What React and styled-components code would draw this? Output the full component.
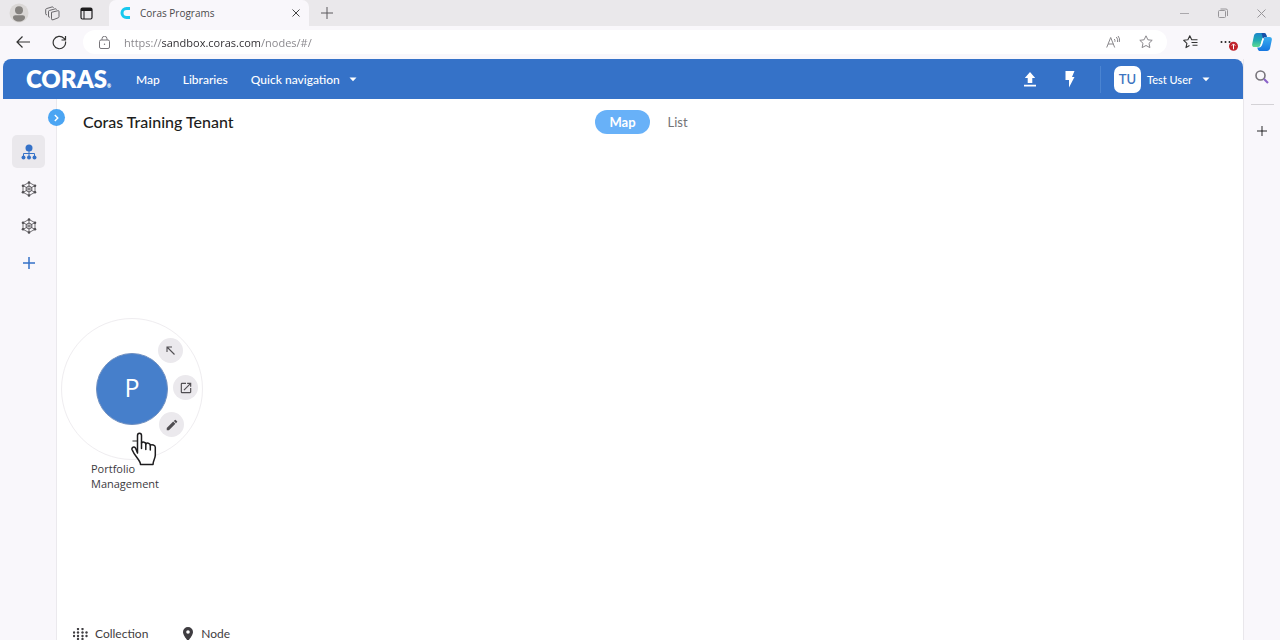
import React, { useState } from 'react';
import styled, { createGlobalStyle } from 'styled-components';

const GlobalStyle = createGlobalStyle`
* {
    box-sizing: border-box;
}
body {
    margin: 0;
    background-color: #f9f7fb;
    font-family: Lato, "Open Sans", sans-serif;
}
button {
    border: 0;
    padding: 0;
    background: none;
    font-family: inherit;
    color: inherit;
    cursor: pointer;
}
svg {
    display: block;
    flex-shrink: 0;
}
`;

const Page = styled.div`
display: flex;
flex-direction: column;
height: 100vh;
overflow: hidden;
`;

const TitleBar = styled.div`
display: flex;
height: 26px;
padding-left: 2px;
background-color: #eae8eb;
`;

const BarButton = styled.button`
display: flex;
align-items: center;
justify-content: center;
flex-shrink: 0;
width: ${props => props.$width || 34}px;
color: ${props => props.$color || '#333'};
`;

const BrowserTab = styled.div`
display: flex;
align-items: center;
width: 200px;
margin-left: 5px;
padding: 0 8px 0 10px;
border-radius: 7px 7px 0 0;
background-color: #f9f7fb;
color: #4a4a4c;
font-family: "Open Sans", sans-serif;
font-size: 10px;
.title {
    flex: 1;
    margin-left: 9px;
}
`;

const WindowControls = styled.div`
display: flex;
margin-left: auto;
`;

const AddressBar = styled.div`
display: flex;
height: 33px;
padding: 0 3px 1px 4px;
`;

const AddressField = styled.label`
display: flex;
align-items: center;
flex: 1;
height: 24px;
margin: 4px 4px 0 5px;
padding: 0 5px 0 15px;
border-radius: 12px;
background-color: white;
color: #77757a;
input {
    flex: 1;
    min-width: 0;
    margin-left: 13px;
    padding: 0;
    border: 0;
    outline: 0;
    font-family: "Open Sans", sans-serif;
    font-size: 11px;
    color: transparent;
    background: linear-gradient(to right, #858388 38px, #2c2a2e 38px, #2c2a2e 136px, #858388 136px);
    background-clip: text;
}
`;

const Body = styled.div`
display: flex;
flex: 1;
min-height: 0;
padding-left: 3px;
`;

const AppFrame = styled.div`
display: flex;
flex-direction: column;
flex: 1;
min-width: 0;
border-radius: 8px 8px 0 0;
overflow: hidden;
background-color: white;
`;

const EdgeSidebar = styled.aside`
display: flex;
flex-direction: column;
align-items: center;
width: 37px;
border-left: 1px solid #e9e7eb;
hr {
    width: 23px;
    margin: 9px 0 8px;
    border: 0;
    border-top: 1px solid #d4d2d6;
}
button {
    display: flex;
    align-items: center;
    justify-content: center;
    width: 36px;
    height: 36px;
}
`;

const AppHeader = styled.header`
display: flex;
align-items: center;
height: 40px;
padding: 0 33px 0 23px;
background-color: #3572c8;
color: white;
font-size: 12px;
font-weight: 500;
`;

const Logo = styled.a`
display: flex;
align-items: flex-end;
width: 84px;
color: white;
font-size: 24px;
font-weight: 800;
line-height: 28px;
text-decoration: none;
small {
    font-size: 5px;
    line-height: 14px;
}
`;

const Nav = styled.nav`
display: flex;
gap: 23px;
margin-left: 26px;
a {
    color: white;
    text-decoration: none;
}
button {
    display: flex;
    align-items: center;
    gap: 9px;
    font-size: 12px;
    font-weight: 500;
}
`;

const HeaderActions = styled.div`
display: flex;
align-items: center;
margin-left: auto;
`;

const HeaderButton = styled.button`
display: flex;
align-items: center;
justify-content: center;
width: 40px;
height: 40px;
`;

const UserMenu = styled.button`
display: flex;
align-items: center;
height: 27px;
margin-left: 10px;
padding-left: 13px;
border-left: 1px solid #4b84d1;
font-size: 11px;
font-weight: 500;
.initials {
    display: flex;
    align-items: center;
    justify-content: center;
    width: 27px;
    height: 27px;
    margin-right: 6px;
    border-radius: 7px;
    background-color: white;
    color: #3d74c0;
    font-size: 13px;
    font-weight: 600;
}
svg {
    margin-left: 10px;
}
`;

const Workspace = styled.div`
display: flex;
flex: 1;
min-height: 0;
`;

const Rail = styled.aside`
position: relative;
display: flex;
flex-direction: column;
gap: 4px;
width: 54px;
padding: 36px 0 0 9px;
border-right: 1px solid #ebe9ed;
background-color: #f9f7fb;
`;

const RailButton = styled.button`
display: flex;
align-items: center;
justify-content: center;
width: 33px;
height: 33px;
border-radius: 5px;
background-color: ${props => (props.$active ? '#eae8ec' : 'transparent')};
color: ${props => props.$color || '#3572c8'};
`;

const RailToggle = styled.button`
position: absolute;
top: 10px;
right: -9px;
z-index: 1;
display: flex;
align-items: center;
justify-content: center;
width: 17px;
height: 17px;
border-radius: 50%;
background-color: #4ba5f3;
color: white;
`;

const Main = styled.main`
display: flex;
flex-direction: column;
flex: 1;
min-width: 0;
`;

const MainHeader = styled.div`
display: grid;
grid-template-columns: 1fr auto 1fr;
align-items: center;
padding: 11px 26px 0;
h1 {
    margin: 0;
    color: #1d1d20;
    font-size: 16px;
    font-weight: 500;
    line-height: 22px;
}
`;

const ViewSwitch = styled.div`
display: flex;
`;

const ViewButton = styled.button`
width: 55px;
height: 24px;
border-radius: 12px;
background-color: ${props => (props.$active ? '#68b1f8' : 'transparent')};
color: ${props => (props.$active ? 'white' : '#737376')};
font-size: 13px;
font-weight: ${props => (props.$active ? 700 : 400)};
`;

const Canvas = styled.div`
position: relative;
flex: 1;
`;

const Node = styled.div`
position: absolute;
width: 142px;
`;

const NodeRing = styled.div`
display: flex;
align-items: center;
justify-content: center;
height: 142px;
border: 1px solid #efedf0;
border-radius: 50%;
`;

const NodeCircle = styled.button`
width: 72px;
height: 72px;
padding-bottom: 4px;
border: 1px solid #6f8fc0;
border-radius: 50%;
background-color: #467fcb;
color: white;
font-family: "Open Sans", sans-serif;
font-size: 25px;
`;

const NodeAction = styled.button`
position: absolute;
display: flex;
align-items: center;
justify-content: center;
width: 25px;
height: 25px;
border-radius: 50%;
background-color: #ebe9ed;
color: #504e52;
`;

const NodeLabel = styled.div`
width: 80px;
margin: 1px 0 0 30px;
color: #3c3a3e;
font-family: "Open Sans", sans-serif;
font-size: 11px;
line-height: 15px;
`;

const Pointer = styled.svg`
position: absolute;
`;

const Legend = styled.footer`
display: flex;
gap: 34px;
height: 13px;
padding-left: 16px;
color: #3f3d41;
font-size: 12px;
line-height: 14px;
span {
    display: flex;
    align-items: center;
    gap: 7px;
}
`;

const Caret = () => (
    <svg width="8" height="5" viewBox="0 0 8 5" fill="currentColor">
        <path d="M.5.5h7L4 4.3z" />
    </svg>
);

const Plus = ({ size, stroke = 1 }) => (
    <svg width={size} height={size} viewBox="0 0 12 12" fill="none" stroke="currentColor" strokeWidth={stroke}>
        <path d="M6 0v12M0 6h12" />
    </svg>
);

const Network = () => (
    <svg width="16" height="16" viewBox="0 0 16 16" fill="none" stroke="currentColor" strokeWidth=".8">
        <path d="M8 1.5l6 3.2v6.6l-6 3.2-6-3.2V4.7zM8 1.5v3.7M8 10.8v3.7M2 4.7l3.6 1.8M14 4.7l-3.6 1.8M2 11.3l3.6-1.8M14 11.3l-3.6-1.8" />
        <path d="M8 5l2.8 1.5v3L8 11 5.2 9.5v-3zM6.3 7.2h3.4M6.3 8.8h3.4" strokeWidth="1" />
        <g fill="currentColor" stroke="none">
            <circle cx="8" cy="1.5" r="1.3" />
            <circle cx="14" cy="4.7" r="1.3" />
            <circle cx="14" cy="11.3" r="1.3" />
            <circle cx="8" cy="14.5" r="1.3" />
            <circle cx="2" cy="11.3" r="1.3" />
            <circle cx="2" cy="4.7" r="1.3" />
        </g>
    </svg>
);

const Hierarchy = () => (
    <svg width="16" height="16" viewBox="0 0 16 16" fill="currentColor">
        <circle cx="8" cy="4" r="3.5" />
        <path d="M8 7v5M2.5 13v-3.5h11V13" fill="none" stroke="currentColor" />
        <circle cx="2.5" cy="13.5" r="2" />
        <circle cx="8" cy="13.5" r="2" />
        <circle cx="13.5" cy="13.5" r="2" />
    </svg>
);

const Copilot = () => (
    <svg width="20" height="18" viewBox="0 0 20 18">
        <defs>
            <linearGradient id="copilotLeft" x1="0" y1="0" x2="0" y2="1">
                <stop offset="0" stopColor="#1c86cc" />
                <stop offset=".5" stopColor="#1fa9b4" />
                <stop offset="1" stopColor="#5fdc90" />
            </linearGradient>
            <linearGradient id="copilotRight" x1="0" y1="0" x2="0" y2="1">
                <stop offset="0" stopColor="#3aaef0" />
                <stop offset="1" stopColor="#1676e0" />
            </linearGradient>
        </defs>
        <path d="M5 0h7c1.200 0 1.800.7 2.200 1.800l.6 1.700h-2c-1.300 0-2 .7-2.400 2L8.500 12c-.4 1.300-1.100 2-2.500 2H2.400C.6 14-.1 12.600.2 11L2 2.500C2.400.9 3.500 0 5 0z" fill="url(#copilotLeft)" />
        <path d="M15 18H8c-1.200 0-1.800-.7-2.200-1.800L5.200 14.500h2c1.300 0 2-.7 2.400-2L11.500 6c.4-1.300 1.100-2 2.500-2h3.600c1.800 0 2.500 1.400 2.200 3L18 15.500c-.4 1.600-1.500 2.500-3 2.500z" fill="url(#copilotRight)" />
        <path d="M9.500 0H12c1.200 0 1.800.7 2.200 1.800L15 4h-1.500c-1.300 0-2 .7-2.400 2z" fill="#174fa8" />
        <path d="M8.300 12.500L10.400 5.500h1.600L9.900 12.500z" fill="#fff" />
    </svg>
);

const Chrome = () => (
    <>
        <TitleBar>
            <BarButton aria-label="Profile">
                <svg width="20" height="20" viewBox="0 0 20 20">
                    <circle cx="10" cy="10" r="9.500" fill="#dad7d6" />
                    <circle cx="10" cy="7.300" r="4" fill="#85827f" />
                    <path d="M4 14.500c0-1.500 1-2.200 2.400-2.200h7.200c1.400 0 2.400.7 2.400 2.200 0 2.200-2.600 4-6 4s-6-1.800-6-4z" fill="#85827f" />
                </svg>
            </BarButton>
            <BarButton aria-label="Workspaces" $width={32} $color="#5b595d">
                <svg width="15" height="15" viewBox="0 0 15 15" fill="none" stroke="currentColor" strokeWidth=".9" strokeLinejoin="round">
                    <path d="M6.500 6.300L13 4.700q1-.2 1 .8v5.200q0 .8-.8 1.100l-5.200 2q-1.500.4-1.500-1z" />
                    <path d="M4.800 11.200q-1.300.2-1.300-1V5.500q0-.8.8-1l6-1.700q1-.2 1.200.8" />
                    <path d="M2 8.800q-1.300.2-1.300-1V3.600q0-.8.8-1l5.700-1.700q1-.2 1.300.8" />
                </svg>
            </BarButton>
            <BarButton aria-label="Tab actions" $width={36} $color="#1c1b1d">
                <svg width="13" height="13" viewBox="0 0 13 13" fill="none" stroke="currentColor">
                    <rect x="1" y="1" width="11" height="11" rx="1.500" strokeWidth="1.200" />
                    <path d="M1 2.500h11" strokeWidth="3" />
                    <path d="M4 4v8" />
                </svg>
            </BarButton>
            <BrowserTab>
                <svg width="12" height="14" viewBox="0 0 12 14" fill="none" stroke="#19c8ee" strokeWidth="3">
                    <path d="M11 2.500H7.500a4.500 4.500 0 000 9H11" />
                </svg>
                <span className="title">Coras Programs</span>
                <button aria-label="Close tab">
                    <svg width="10" height="8" viewBox="0 0 10 8" stroke="#444" strokeWidth="1">
                        <path d="M1.500.5l7 7M8.500.5l-7 7" />
                    </svg>
                </button>
            </BrowserTab>
            <BarButton aria-label="New tab" $width={36} $color="#5b595d"><Plus size={12} /></BarButton>
            <WindowControls>
                <BarButton aria-label="Minimize" $width={38} $color="#aaa8ac">
                    <svg width="10" height="10" viewBox="0 0 10 10" stroke="currentColor"><path d="M0 5.500h9" /></svg>
                </BarButton>
                <BarButton aria-label="Restore" $width={38} $color="#98969a">
                    <svg width="10" height="10" viewBox="0 0 10 10" fill="none" stroke="currentColor">
                        <rect x=".5" y="2.500" width="7" height="7" rx="1" />
                        <path d="M2.500 1h5.500a1.500 1.500 0 011.500 1.500V8" />
                    </svg>
                </BarButton>
                <BarButton aria-label="Close" $width={38} $color="#98969a">
                    <svg width="9" height="9" viewBox="0 0 9 9" stroke="currentColor"><path d="M.5.5l8 8M8.500.5l-8 8" /></svg>
                </BarButton>
            </WindowControls>
        </TitleBar>
        <AddressBar>
            <BarButton aria-label="Back" $width={37}>
                <svg width="14" height="12" viewBox="0 0 14 12" fill="none" stroke="currentColor" strokeWidth="1.200">
                    <path d="M14 6H1M6.500.5L1 6l5.500 5.500" />
                </svg>
            </BarButton>
            <BarButton aria-label="Refresh" $width={37}>
                <svg width="15" height="15" viewBox="0 0 15 15" fill="none" stroke="currentColor" strokeWidth="1.200">
                    <path d="M13.500 6.500A6.200 6.200 0 1112 3.400l1.300 1.500M13.500 1v4h-4" />
                </svg>
            </BarButton>
            <AddressField>
                <svg width="13" height="13" viewBox="0 0 13 13" fill="none" stroke="currentColor">
                    <rect x="1.500" y="4" width="10" height="8.500" rx="1.500" />
                    <path d="M4 4V2.800a2.500 2.500 0 015 0V4" />
                    <circle cx="6.500" cy="8.200" r=".7" fill="currentColor" stroke="none" />
                </svg>
                <input aria-label="Address" defaultValue="https://sandbox.coras.com/nodes/#/" />
                <BarButton aria-label="Read aloud" $width={33} $color="#8a888c">
                    <svg width="14" height="12" viewBox="0 0 14 12" fill="none" stroke="currentColor">
                        <path d="M.7 11.500L4.700 1.500l4 10M2 8h5.500M8.300 3q1 1.200.6 2.800M10.300 1q2 2 1.200 5M12.100 0q2.300 2.800 1.200 6" />
                    </svg>
                </BarButton>
                <BarButton aria-label="Add to favorites" $width={33} $color="#8a888c">
                    <svg width="14" height="14" viewBox="0 0 14 14" fill="none" stroke="currentColor" strokeLinejoin="round">
                        <path d="M7 .8l1.900 4 4.300.5-3.200 3 .9 4.300L7 10.500l-3.900 2.100.9-4.300-3.200-3 4.300-.5z" />
                    </svg>
                </BarButton>
            </AddressField>
            <BarButton aria-label="Favorites" $width={38}>
                <svg width="15" height="14" viewBox="0 0 15 14" fill="none" stroke="currentColor" strokeWidth="1.100" strokeLinejoin="round">
                    <path d="M9.500 4.800h-.8L6.800.8l-1.900 4-4.200.5 3.200 3-.9 4.300 3.500-2M9.500 4.800H14.500M8.500 7.500h6M9.500 10.200h5" />
                </svg>
            </BarButton>
            <BarButton aria-label="Settings and more" $width={38}>
                <svg width="19" height="18" viewBox="0 0 19 18" fill="#222">
                    <circle cx="2.500" cy="9" r="1" />
                    <circle cx="6.500" cy="9" r="1" />
                    <circle cx="10.500" cy="9" r="1" />
                    <circle cx="14.500" cy="13.300" r="4.500" fill="#c0232c" />
                    <path d="M14.500 16.300v-5M12.800 12.600l1.700-1.700 1.700 1.700" fill="none" stroke="#fff" />
                </svg>
            </BarButton>
            <BarButton aria-label="Copilot" $width={30}><Copilot /></BarButton>
        </AddressBar>
    </>
);

const nodes = [
    { id: 'portfolio', name: 'Portfolio Management', left: 4, top: 184 },
];

const MapNode = ({ node }) => (
    <Node style={{ left: node.left, top: node.top }}>
        <NodeRing>
            <NodeCircle>{node.name[0]}</NodeCircle>
        </NodeRing>
        <NodeAction aria-label="Collapse" style={{ left: 97, top: 20 }}>
            <svg width="9" height="9" viewBox="0 0 9 9" fill="none" stroke="currentColor" strokeWidth="1.100">
                <path d="M8.500 8.500L1 1M1 6V1h5" />
            </svg>
        </NodeAction>
        <NodeAction aria-label="Open" style={{ left: 112, top: 57 }}>
            <svg width="14" height="14" viewBox="0 0 24 24" fill="currentColor">
                <path d="M19 19H5V5h7V3H5a2 2 0 00-2 2v14a2 2 0 002 2h14c1.100 0 2-.9 2-2v-7h-2v7zM14 3v2h3.590l-9.830 9.830 1.410 1.410L19 6.410V10h2V3h-7z" />
            </svg>
        </NodeAction>
        <NodeAction aria-label="Edit" style={{ left: 98, top: 94 }}>
            <svg width="14" height="14" viewBox="0 0 24 24" fill="currentColor">
                <path d="M3 17.250V21h3.750L17.810 9.940l-3.750-3.750L3 17.250zM20.710 7.040a1 1 0 000-1.410l-2.340-2.340a1 1 0 00-1.410 0l-1.830 1.830 3.750 3.750 1.830-1.830z" />
            </svg>
        </NodeAction>
        <NodeLabel>{node.name}</NodeLabel>
    </Node>
);

const App = () => {
    const [view, setView] = useState('Map');

    return (
        <Page>
            <GlobalStyle />
            <Chrome />
            <Body>
                <AppFrame>
                    <AppHeader>
                        <Logo href="#/">CORAS<small>®</small></Logo>
                        <Nav>
                            <a href="#/map">Map</a>
                            <a href="#/libraries">Libraries</a>
                            <button>Quick navigation <Caret /></button>
                        </Nav>
                        <HeaderActions>
                            <HeaderButton aria-label="Upload">
                                <svg width="12" height="15" viewBox="0 0 12 15" fill="currentColor">
                                    <path d="M6 0l5.200 6H8.300v5H3.700V6H.8zM0 12.800h12v1.700H0z" />
                                </svg>
                            </HeaderButton>
                            <HeaderButton aria-label="Quick actions">
                                <svg width="10" height="17" viewBox="0 0 10 17" fill="currentColor">
                                    <path d="M.5 0h9L7 6h2.500L4 16.500V9H.5z" />
                                </svg>
                            </HeaderButton>
                            <UserMenu>
                                <span className="initials">TU</span>
                                Test User
                                <Caret />
                            </UserMenu>
                        </HeaderActions>
                    </AppHeader>
                    <Workspace>
                        <Rail>
                            <RailToggle aria-label="Expand sidebar">
                                <svg width="5" height="8" viewBox="0 0 5 8" fill="none" stroke="currentColor" strokeWidth="1.400">
                                    <path d="M.8 1l3 3-3 3" />
                                </svg>
                            </RailToggle>
                            <RailButton aria-label="Hierarchy" $active><Hierarchy /></RailButton>
                            <RailButton aria-label="Network" $color="#504e52"><Network /></RailButton>
                            <RailButton aria-label="Network copy" $color="#504e52"><Network /></RailButton>
                            <RailButton aria-label="Add"><Plus size={12} stroke={1.500} /></RailButton>
                        </Rail>
                        <Main>
                            <MainHeader>
                                <h1>Coras Training Tenant</h1>
                                <ViewSwitch>
                                    {['Map', 'List'].map(name => (
                                        <ViewButton key={name} $active={view === name} onClick={() => setView(name)}>
                                            {name}
                                        </ViewButton>
                                    ))}
                                </ViewSwitch>
                            </MainHeader>
                            <Canvas>
                                {nodes.map(node => <MapNode key={node.id} node={node} />)}
                                <Pointer
                                    width="26"
                                    height="34"
                                    viewBox="0 0 26 34"
                                    fill="#fff"
                                    stroke="#1d1c1e"
                                    strokeWidth="1.500"
                                    strokeLinejoin="round"
                                    strokeLinecap="round"
                                    style={{ left: 74, top: 298 }}
                                >
                                    <path d="M2 9h5" stroke="#777" />
                                    <path d="M6.500 21V3.500C6.500.5 10.500.5 10.500 3.500V11c1-1.500 4.300-1 4.300 1 1-1.500 4.300-1 4.500 1.200 1.500-1 5-.3 5 2V23c0 4-2.300 5.500-2.300 9.500H9.500C9.500 28 4 25 1 17.500c-.5-2.300 2-3.300 3.500-1.600L6.500 21z" />
                                    <path d="M10.500 11v5.500M14.800 12v5.500M19.300 13.500V18" fill="none" />
                                </Pointer>
                            </Canvas>
                            <Legend>
                                <span>
                                    <svg width="15" height="12" viewBox="0 0 15 12" fill="currentColor">
                                        {[[5, 1], [9.500, 1], [1, 4.500], [5, 4.500], [9.500, 4.500], [13.500, 4.500], [1, 8], [5, 8], [9.500, 8], [13.500, 8], [5, 11], [9.500, 11]].map(([x, y]) => (
                                            <circle key={`${x}-${y}`} cx={x} cy={y} r="1.200" />
                                        ))}
                                    </svg>
                                    Collection
                                </span>
                                <span>
                                    <svg width="12" height="14" viewBox="0 0 12 14" fill="currentColor">
                                        <path fillRule="evenodd" d="M6 0a5 5 0 00-5 5c0 3.500 5 9 5 9s5-5.500 5-9a5 5 0 00-5-5zm0 6.800a1.800 1.800 0 110-3.600 1.800 1.800 0 010 3.600z" />
                                    </svg>
                                    Node
                                </span>
                            </Legend>
                        </Main>
                    </Workspace>
                </AppFrame>
                <EdgeSidebar>
                    <button aria-label="Search">
                        <svg width="14" height="14" viewBox="0 0 14 14" fill="none" strokeWidth="1.600">
                            <circle cx="5.500" cy="5.500" r="4.500" stroke="#77747a" />
                            <path d="M9 9l4 4" stroke="#8a62c8" strokeWidth="2.200" />
                        </svg>
                    </button>
                    <hr />
                    <button aria-label="Add to sidebar"><Plus size={10} /></button>
                </EdgeSidebar>
            </Body>
        </Page>
    );
};

export default App;
